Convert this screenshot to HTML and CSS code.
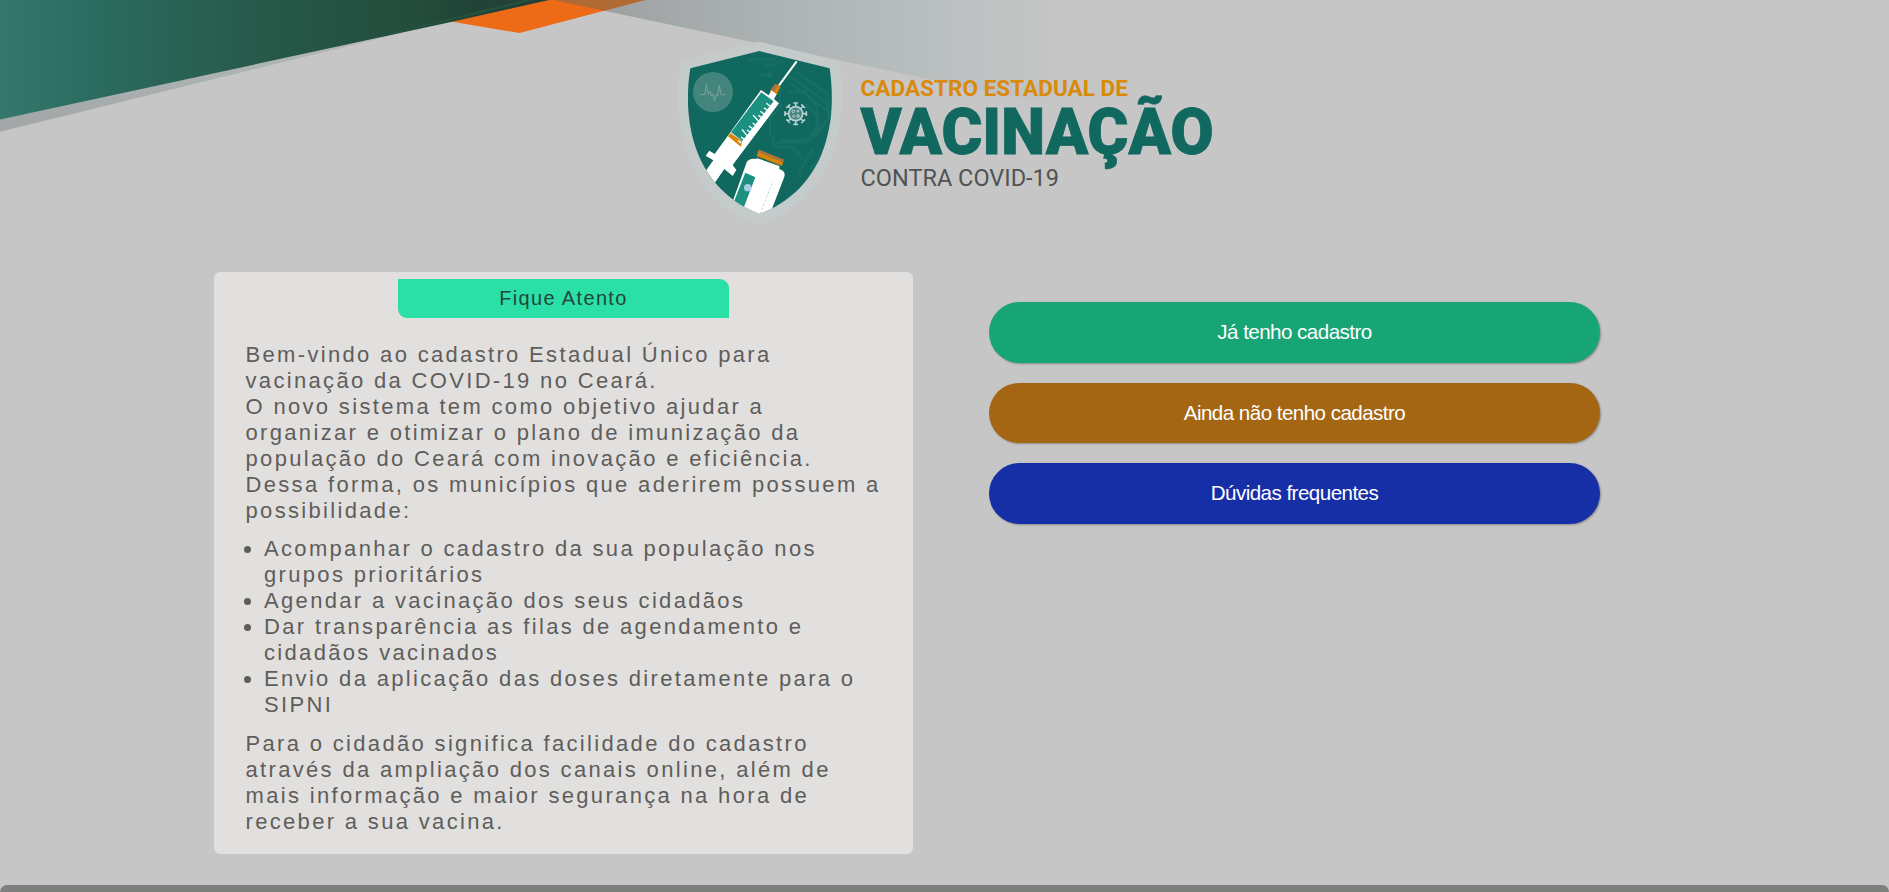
FILE: index.html
```html
<!DOCTYPE html>
<html lang="pt-BR">
<head>
<meta charset="utf-8">
<title>Cadastro Estadual de Vacinação</title>
<link rel="stylesheet" href="styles.css">
</head>
<body>
<svg class="backdrop" width="1100" height="140" viewBox="0 0 1100 140" aria-hidden="true">
  <defs>
    <linearGradient id="green"><stop offset="0" stop-color="#35776b"/><stop offset=".18" stop-color="#2b6b5f"/><stop offset=".5" stop-color="#265848"/><stop offset=".75" stop-color="#234d3c"/><stop offset=".85" stop-color="#214437"/><stop offset="1" stop-color="#243f37"/></linearGradient>
    <linearGradient id="shade"><stop offset="0" stop-color="#a2a6a7"/><stop offset=".5" stop-color="#acb2b2"/><stop offset="1" stop-color="#b8b8b8"/></linearGradient>
    <linearGradient id="haze"><stop offset="0" stop-color="#989b9b"/><stop offset=".4" stop-color="#acb2b2"/><stop offset=".72" stop-color="#b9bfbf"/><stop offset="1" stop-color="#c6c6c6"/></linearGradient>
  </defs>
  <path d="M553 0H1075V110Z" fill="url(#haze)"/>
  <path d="M0 119V131.7L412 30.5 451 21Z" fill="url(#shade)"/>
  <path d="M451 21.5 519.5 33 645 0H540Z" fill="#ed6a17"/>
  <path d="M553 0 604 10.7 645 0Z" fill="#b06a33"/>
  <path d="M0 0V119.5L451 22 549 0Z" fill="url(#green)"/>
  <path d="M373 37 524 0H535L385 36Z" fill="#25523f"/>
</svg>
<header class="header">
<svg class="logo" width="560" height="195" viewBox="0 0 560 195" role="img" aria-label="Cadastro Estadual de Vacinação contra Covid-19">
  <defs><clipPath id="shield"><path d="M268 48 479 100C500 240 480 455 268 537 60 455 38 240 61 100Z"/></clipPath></defs>
  <g transform="scale(.33333)">
    <path d="M268 20 507 78C527 190 515 320 450 430 405 500 345 548 268 570 190 548 130 500 88 430 20 315 12 190 34 78Z" fill="#c5cbcb"/>
    <g clip-path="url(#shield)">
      <path d="M0 0H540V585H0Z" fill="#10685f"/>
      <g fill="none" stroke="#176f65" stroke-width="7">
        <path d="M235 73H318M280 92H310L322 80H345M265 121H300M375 110 480 180M360 125 480 210M360 145 490 240M350 170H405L440 215V290M330 155V220L300 250V300M405 205 445 245V270L410 315H330M475 190V250L435 310M485 235V320L420 405M310 300V335H365L400 375M315 322H415L455 270M385 415 430 340"/>
      </g>
      <g fill="#176f65"><circle cx="298" cy="121" r="9"/><circle cx="388" cy="352" r="6"/><circle cx="390" cy="416" r="5"/></g>
      <circle cx="129" cy="171" r="60" fill="#43857c"/>
      <path d="M90 179H104L109 148 115 178 120 168 124 184 128 177 134 198 139 178 143 184 148 151 153 179H168" fill="none" stroke="#91afa9" stroke-width="2"/>
      <path d="M380 79 327 151" stroke="#fff" stroke-width="6"/>
      <path d="M315 148 332 152 320 180 300 169Z" fill="#d98508"/>
      <path d="M315 148 324 150 309 174 300 169Z" fill="#a97340"/>
      <path d="M304 166 320 178 312 192 327 205 188 390 199 405 188 423 163 402 134 444 100 418 130 376 107 362 118 347 134 357 273 165 296 181Z" fill="#fff"/>
      <path d="M274 172 311 199 217 318 183 292Z" fill="#1d9181"/>
      <path d="m181 294 36 25-4 16-39-31Z" fill="#d98508"/>
      <path d="m300 213-11-8m2 20-9-7m0 19-11-8m3 18-9-6m1 18-17-19m8 31-9-7m0 17-11-8m3 18-9-6m0 17-15-19m7 30-10-7m1 18-10-7" stroke="#fff" stroke-width="4"/>
      <path d="m266 344 75 30-5 19-76-30Z" fill="#d98508"/><path d="m266 344 75 30-2 8-75-30Z" fill="#a97340"/>
      <path d="m260 369 68 24 0 10q20 5 15 22L295 550H170L230 382q7-14 30-10Z" fill="#fff"/>
      <path d="M226 413 256 427 221 518 190 505Z" fill="#1d9181"/>
      <circle cx="233" cy="458" r="11" fill="#a9cbe6"/>
      <path d="M306 445 269 540" stroke="#9fc3cf" stroke-width="2" stroke-dasharray="8 5"/>
      <g transform="translate(377 236)" fill="none" stroke="#b8d0d2" stroke-width="5">
        <circle r="21" fill="#47877f"/>
        <path d="M0-20V-32M-7-32H7M0 20V32M-7 32H7M-20 0H-32M-32-7V7M20 0H32M32-7V7M14-14 23-23M17-28 28-17M-14-14-23-23M-17-28-28-17M14 14 23 23M17 28 28 17M-14 14-23 23M-17 28-28 17"/>
        <g stroke-width="3"><circle cx="-7" cy="-7" r="4"/><circle cx="7" cy="-8" r="3"/><circle cx="7" cy="7" r="4"/><circle cx="-6" cy="8" r="3"/></g>
      </g>
    </g>
  </g>
  <text class="logo-over" x="190.5" y="60.5" textLength="267.5" lengthAdjust="spacingAndGlyphs">CADASTRO ESTADUAL DE</text>
  <text class="logo-main" x="190.5" y="119" textLength="353" lengthAdjust="spacingAndGlyphs">VACINAÇÃO</text>
  <text class="logo-under" x="190.5" y="150.7" textLength="198.5" lengthAdjust="spacingAndGlyphs">CONTRA COVID-19</text>
</svg>
</header>
<main class="content">
  <section class="card">
    <h2 class="tab">Fique Atento</h2>
    <div class="copy">
      <p>Bem-vindo ao cadastro Estadual Único para<br>vacinação da COVID-19 no Ceará.<br>O novo sistema tem como objetivo ajudar a<br>organizar e otimizar o plano de imunização da<br>população do Ceará com inovação e eficiência.<br>Dessa forma, os municípios que aderirem possuem a<br>possibilidade:</p>
      <ul>
        <li>Acompanhar o cadastro da sua população nos<br>grupos prioritários</li>
        <li>Agendar a vacinação dos seus cidadãos</li>
        <li>Dar transparência as filas de agendamento e<br>cidadãos vacinados</li>
        <li>Envio da aplicação das doses diretamente para o<br>SIPNI</li>
      </ul>
      <p>Para o cidadão significa facilidade do cadastro<br>através da ampliação dos canais online, além de<br>mais informação e maior segurança na hora de<br>receber a sua vacina.</p>
    </div>
  </section>
  <nav class="actions">
    <a class="btn btn-green">Já tenho cadastro</a>
    <a class="btn btn-brown">Ainda não tenho cadastro</a>
    <a class="btn btn-blue">Dúvidas frequentes</a>
  </nav>
</main>
<footer class="footer"></footer>
</body>
</html>
```
FILE: styles.css
```css
* { box-sizing: border-box; }
body {
  margin: 0;
  height: 892px;
  overflow: hidden;
  display: flex;
  flex-direction: column;
  background: #c6c6c6;
  font-family: "Liberation Sans", Arial, sans-serif;
}
.backdrop { position: absolute; top: 0; left: 0; z-index: -1; }
.header { height: 272px; padding: 35px 0 0 670px; }
.logo { display: block; }
.logo text { font-family: Roboto, "Open Sans", sans-serif; }
.logo .logo-over { font-size: 22.5px; font-weight: 700; fill: #d98a0b; }
.logo .logo-main { font-size: 65px; font-weight: 900; fill: #10685f; stroke: #10685f; stroke-width: .8px; }
.logo .logo-under { font-size: 23px; font-weight: 400; fill: #4f5352; }
.content { display: flex; align-items: flex-start; gap: 76px; padding-left: 214px; }
.card {
  width: 699px;
  height: 582px;
  padding-top: 7px;
  border-radius: 6px;
  background: #e1e0de;
}
.tab {
  width: 331px;
  height: 39px;
  margin: 0 auto;
  border-radius: 0 9px 0 9px;
  background: #2be0a6;
  color: #23463c;
  font-size: 20px;
  font-weight: 400;
  line-height: 38px;
  letter-spacing: 1.35px;
  text-align: center;
}
.copy {
  padding: 24px 0 0 31.5px;
  color: #5f5d5b;
  font-size: 22px;
  line-height: 26px;
  letter-spacing: 2.33px;
  white-space: nowrap;
}
.copy p { margin: 0 0 12px; }
.copy ul { margin: 0 0 13px; padding-left: 18.5px; }
.actions { display: flex; flex-direction: column; gap: 20px; width: 611px; padding-top: 30px; }
.btn {
  height: 60.5px;
  border-radius: 31px;
  box-shadow: 1px 1px 2px rgba(0, 0, 0, .3);
  color: #fff;
  font-size: 20.6px;
  line-height: 59px;
  letter-spacing: -.55px;
  text-align: center;
}
.btn-green { background: #18a576; }
.btn-brown { background: #a56614; }
.btn-blue { background: #162fa6; }
.footer { height: 7px; margin-top: auto; border-radius: 7px 7px 0 0; background: #7e807e; }
```
